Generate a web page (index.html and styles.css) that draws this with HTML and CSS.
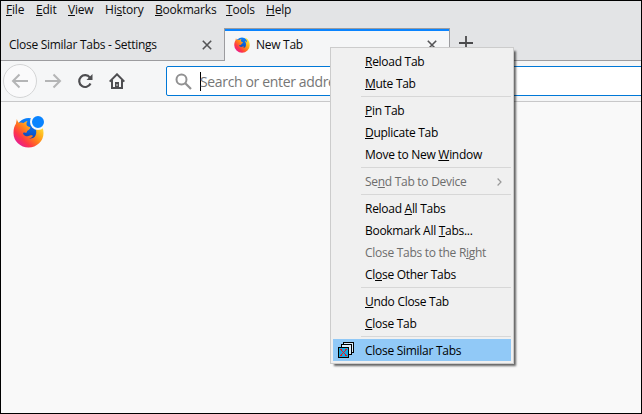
FILE: index.html
```html
<!DOCTYPE html>
<html lang="en">
<head>
<meta charset="utf-8">
<title>New Tab</title>
<link rel="stylesheet" href="styles.css">
</head>
<body>
<svg width="0" height="0" class="defs" aria-hidden="true">
  <defs>
    <linearGradient id="flame" x1="0.9" y1="0.1" x2="0.15" y2="0.85">
      <stop offset="0" stop-color="#fff04a"/><stop offset="0.3" stop-color="#ffb61d"/><stop offset="0.55" stop-color="#ff7a1c"/><stop offset="0.8" stop-color="#ff3647"/><stop offset="1" stop-color="#e8218c"/>
    </linearGradient>
    <linearGradient id="globe" x1="0.6" y1="0" x2="0.4" y2="1">
      <stop offset="0" stop-color="#0a84ff"/><stop offset="0.6" stop-color="#0b5bd0"/><stop offset="1" stop-color="#2b2a8c"/>
    </linearGradient>
    <symbol id="fox" viewBox="0 0 32 32">
      <circle cx="16" cy="13.500" r="12.500" fill="url(#globe)"/>
      <path fill="url(#flame)" d="M4 2C4.500 4 5 5.200 6.300 6C8 5.500 9.500 5.600 11 6.200C12 5 13.500 4 15 4C13.800 5.800 13.500 7.500 14.500 9C15.500 10 17.500 10 18 11C17.500 12.500 15.500 13.500 14.500 14.500C14.500 16.200 13.800 16.500 12.500 16.200C11 15.800 10 16.500 10.500 17.500C12 20 15 20.500 17.500 19.200C19 18.500 20.500 19 20.500 19.800C19 21.500 17.500 22 16.500 22C21 23 24 20 24 15.500C24 12 23 9.500 21.500 8C24.500 8.500 26 10 26.500 11.500C26.500 7 24 4 21.500 1.500C27 2.500 31.500 9 31.500 16.500A15.500 15 0 0 1 .5 16.500C.5 12 1.500 9 3 7Z"/>
    </symbol>
    <symbol id="cross" viewBox="0 0 10 10"><path d="M.8.8 9.200 9.200M9.200.8.8 9.200" fill="none" stroke="#545456" stroke-width="1.600"/></symbol>
  </defs>
</svg>
<div class="window">
  <nav class="menubar">
    <span class="m-file"><u>F</u>ile</span><span class="m-edit"><u>E</u>dit</span><span class="m-view"><u>V</u>iew</span><span class="m-history">Hi<u>s</u>tory</span><span class="m-bookmarks"><u>B</u>ookmarks</span><span class="m-tools"><u>T</u>ools</span><span><u>H</u>elp</span>
  </nav>
  <div class="tabs">
    <div class="tab"><span class="title">Close Similar Tabs - Settings</span><svg class="close"><use href="#cross"/></svg></div>
    <div class="tab active"><svg class="favicon"><use href="#fox"/></svg><span>New Tab</span><svg class="close"><use href="#cross"/></svg></div>
    <div class="add"><svg width="14" height="14" viewBox="0 0 14 14"><path d="M7 0V14M0 7H14" stroke="#4a4a4c" stroke-width="1.800"/></svg></div>
  </div>
  <div class="toolbar">
    <div class="back"><svg width="18" height="16" viewBox="0 0 18 16"><path d="M17 8H2M8.500 1.500 2 8 8.500 14.500" fill="none" stroke="#b4b5b6" stroke-width="2"/></svg></div>
    <svg class="forward" width="17" height="16" viewBox="0 0 17 16"><path d="M0 8H15M8.500 1.500 15 8 8.500 14.500" fill="none" stroke="#b4b5b6" stroke-width="2"/></svg>
    <svg class="reload" width="16" height="16" viewBox="0 0 16 16"><path d="M12.900 4.600A5.900 5.900 0 1 0 13.500 10.500" fill="none" stroke="#4d4d50" stroke-width="2.200"/><path d="M15.500 1V7H9.500Z" fill="#4d4d50"/></svg>
    <svg class="home" width="16" height="16" viewBox="0 0 16 16"><path d="M.7 8.600 8 1.300 15.300 8.600" fill="none" stroke="#4d4d50" stroke-width="2"/><path d="M3 7V15H13V7" fill="none" stroke="#4d4d50" stroke-width="2"/><path d="M6 15V9H10V15Z" fill="#4d4d50"/><path d="M8 11V13" stroke="#ddd"/></svg>
    <div class="urlbar">
      <svg class="search" width="17" height="17" viewBox="0 0 17 17"><circle cx="6.500" cy="6.500" r="5" fill="none" stroke="#919192" stroke-width="2"/><path d="M10.300 10.300 16 16" stroke="#919192" stroke-width="2.200"/></svg>
      <i class="caret"></i><span class="placeholder">Search or enter address</span>
    </div>
  </div>
  <main class="page">
    <div class="logo"><svg width="31" height="31"><use href="#fox"/></svg><i class="badge"></i></div>
  </main>
  <div class="menu">
    <div class="item"><u>R</u>eload Tab</div>
    <div class="item"><u>M</u>ute Tab</div>
    <hr>
    <div class="item"><u>P</u>in Tab</div>
    <div class="item"><u>D</u>uplicate Tab</div>
    <div class="item">Move to New <u>W</u>indow</div>
    <hr>
    <div class="item disabled">Se<u>n</u>d Tab to Device<svg class="chevron" width="5" height="8" viewBox="0 0 5 8"><path d="M.6.5 4 4 .6 7.500" fill="none" stroke="#999" stroke-width="1.200"/></svg></div>
    <hr>
    <div class="item">Reload <u>A</u>ll Tabs</div>
    <div class="item">Bookmark All <u>T</u>abs...</div>
    <div class="item disabled">Close Tabs to the R<u>i</u>ght</div>
    <div class="item">Cl<u>o</u>se Other Tabs</div>
    <hr>
    <div class="item"><u>U</u>ndo Close Tab</div>
    <div class="item"><u>C</u>lose Tab</div>
    <hr>
    <div class="item selected"><svg class="stack" width="16" height="16" viewBox="0 0 16 16" shape-rendering="crispEdges"><g stroke="#000"><path d="M5.500.5H15.500V10.500H5.500Z" fill="#d9ecfb"/><path d="M3.500 2.500H13.500V12.500H3.500Z" fill="#d9ecfb"/><path d="M.5 5.500H10.500V15.500H.5Z" fill="#18a8e0"/></g><g fill="#f0141e"><path d="M2 7H4V8H2ZM7 7H9V8H7ZM3 8H4V9H3ZM7 8H8V9H7ZM4 9H5V10H4ZM6 9H7V10H6ZM5 10H6V11H5ZM4 11H5V12H4ZM6 11H7V12H6ZM3 12H4V13H3ZM7 12H8V13H7ZM2 13H4V14H2ZM7 13H9V14H7Z"/></g></svg>Close Similar Tabs</div>
  </div>
</div>
</body>
</html>
```

FILE: styles.css
```css
* { box-sizing: border-box; }
body { margin: 0; font: 12px/16px "Open Sans", "Noto Sans", sans-serif; letter-spacing: -0.28px; color: #0c0c0d; }
.defs { position: absolute; }
svg { display: block; flex: none; }
u { text-decoration: underline; text-decoration-thickness: 1px; text-underline-offset: 1px; text-decoration-skip-ink: none; }
.window { position: relative; width: 642px; height: 414px; border: 1px solid #000; background: #f9f9fa; overflow: hidden; display: flex; flex-direction: column; }
.menubar { height: 27px; background: #e3e4e6; padding: 1px 0 0 5px; display: flex; flex: none; white-space: nowrap; letter-spacing: -0.2px; }
.m-file { width: 30px; }
.m-edit { width: 32px; }
.m-view { width: 37px; }
.m-history { width: 50px; }
.m-bookmarks { width: 71px; }
.m-tools { width: 40px; }
.tabs { height: 33px; flex: none; display: flex; background: #e3e4e6; box-shadow: inset 0 -1px #9c9c9f; }
.tab { width: 223px; display: flex; align-items: center; padding: 1px 12px 0 8px; white-space: nowrap; }
.tab.active { width: 226px; background: #f5f6f7; border: 1px solid #9c9c9f; border-bottom: 0; box-shadow: inset 0 2px #0a84ff; padding: 0 12px 0 9px; }
.close { width: 10px; height: 10px; margin-left: auto; }
.favicon { width: 16px; height: 16px; margin-right: 6px; }
.add { padding: 8px 0 0 9px; }
.toolbar { height: 41px; flex: none; display: flex; align-items: center; background: #f5f6f7; border-bottom: 1px solid #c8c8c9; padding-left: 2px; }
.back { flex: none; width: 34px; height: 34px; border: 1px solid #d4d5d6; border-radius: 50%; background: #fafafb; display: grid; place-items: center; }
.forward { margin-left: 8px; }
.reload { margin-left: 15px; }
.home { margin-left: 16px; }
.urlbar { width: 490px; flex: none; height: 30px; margin-left: 41px; border: 1px solid #0078d7; border-radius: 2px 0 0 2px; background: #fff; display: flex; align-items: center; padding-left: 8px; color: #767676; font-size: 14px; letter-spacing: -0.35px; }
.caret { width: 1px; height: 19px; background: #000; margin: 0 -1px 0 8px; }
.placeholder { padding-top: 2px; }
.page { flex: 1; background: #f9f9f9; padding: 15px 0 0 12px; }
.logo { position: relative; width: 31px; height: 31px; }
.badge { position: absolute; left: 17px; top: -3px; width: 16px; height: 16px; border-radius: 50%; background: #0a84ff; border: 2px solid #f9f9f9; }
.menu { position: absolute; left: 329px; top: 46px; width: 184px; height: 317px; padding: 2px; background: #f0f0f0; border: 1px solid #ccc; box-shadow: 3px 3px 2px -1px rgba(0,0,0,.6); color: #000; }
.item { height: 22px; line-height: 24px; padding-left: 32px; position: relative; white-space: nowrap; }
.item.disabled { color: #6d6d6d; }
.item.selected { background: #91c9f7; }
.menu hr { height: 1px; border: 0; margin: 2px 0 2px 28px; background: #d7d7d7; }
.chevron { position: absolute; right: 9px; top: 8px; }
.stack { position: absolute; left: 5px; top: 3px; }
```
